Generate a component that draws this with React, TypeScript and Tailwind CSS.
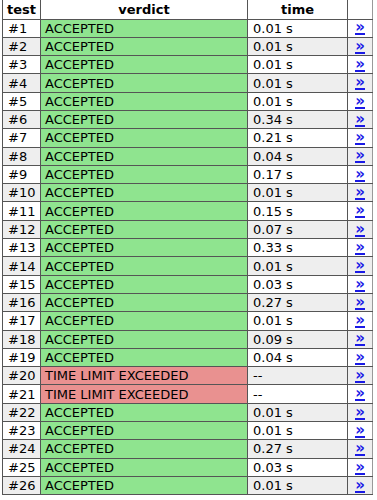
import React from 'react';

type Row = { id: number; verdict: string; time: string };

const ACC = 'ACCEPTED';
const TLE = 'TIME LIMIT EXCEEDED';

const rows: Row[] = [
  ['0.01'], ['0.01'], ['0.01'], ['0.01'], ['0.01'], ['0.34'], ['0.21'], ['0.04'],
  ['0.17'], ['0.01'], ['0.15'], ['0.07'], ['0.33'], ['0.01'], ['0.03'], ['0.27'],
  ['0.01'], ['0.09'], ['0.04'], [null], [null], ['0.01'], ['0.01'], ['0.27'],
  ['0.03'], ['0.01'],
].map(([t], i) => ({
  id: i + 1,
  verdict: t === null ? TLE : ACC,
  time: t === null ? '--' : `${t} s`,
}));

export default function App() {
  return (
    <div className="bg-white w-[377px] h-[500px] pl-[2px] overflow-hidden" style={{ fontFamily: '"DejaVu Sans", Verdana, sans-serif' }}>
      <table className="border-collapse text-[13px] text-black table-fixed w-[370px]">
        <colgroup>
          <col className="w-[38px]" />
          <col className="w-[207px]" />
          <col className="w-[100px]" />
          <col className="w-[25px]" />
        </colgroup>
        <thead>
          <tr className="h-[19px]">
            <th className="border border-[#555] border-t-0 font-bold text-center leading-none">test</th>
            <th className="border border-[#555] border-t-0 font-bold text-center leading-none">verdict</th>
            <th className="border border-[#555] border-t-0 font-bold text-center leading-none">time</th>
            <th className="border border-[#555] border-t-0 border-r-[#999]"></th>
          </tr>
        </thead>
        <tbody>
          {rows.map((r) => {
            const zebra = r.id % 2 === 0 ? 'bg-[#eeeeee]' : 'bg-white';
            const tle = r.verdict === TLE;
            return (
              <tr key={r.id} className="h-[18.3px]">
                <td className={`border border-[#555] px-[5px] leading-none whitespace-nowrap ${zebra}`}>#{r.id}</td>
                <td className={`border border-[#555] px-[4px] leading-none whitespace-nowrap ${tle ? 'bg-[#e99190]' : 'bg-[#8fe48f]'}`}>{r.verdict}</td>
                <td className={`border border-[#555] px-[5px] leading-none whitespace-nowrap ${zebra}`}>{r.time}</td>
                <td className={`border border-[#555] border-r-[#999] text-center leading-none ${zebra}`}>
                  <a href="#" className="inline-block align-middle text-[#1a1ae6] font-bold no-underline text-[15px] leading-[12px] border-b-2 border-[#1a1ae6]">»</a>
                </td>
              </tr>
            );
          })}
        </tbody>
      </table>
    </div>
  );
}
